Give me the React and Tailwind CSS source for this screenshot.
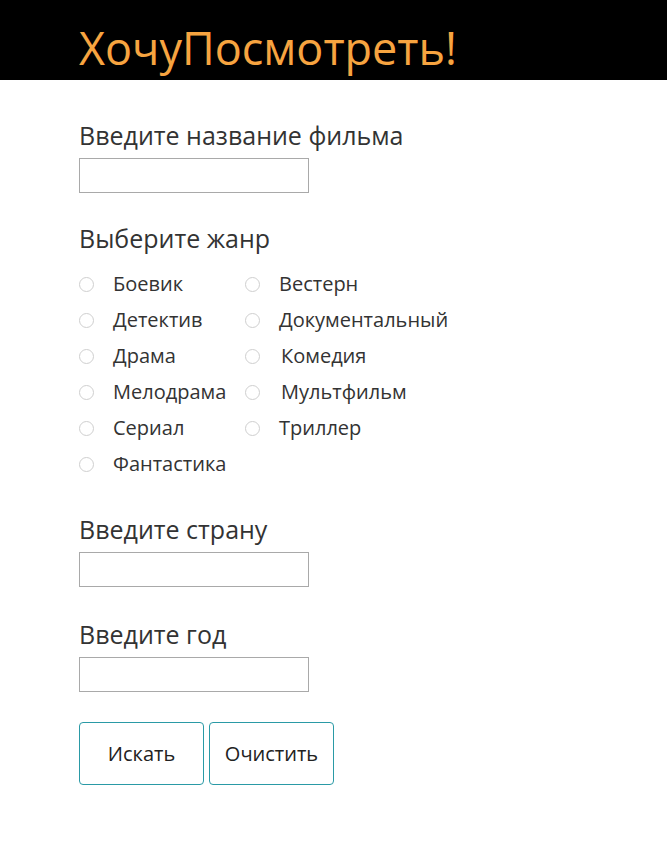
import React from "react";

const genres = [
  ["Боевик", "Вестерн"],
  ["Детектив", "Документальный"],
  ["Драма", "Комедия"],
  ["Мелодрама", "Мультфильм"],
  ["Сериал", "Триллер"],
  ["Фантастика", null],
];

function Radio({ label, shift }) {
  return (
    <label className="flex items-center h-[36px]">
      <span className="w-[15px] h-[15px] rounded-full border border-[#cfcfcf] bg-white shrink-0" />
      <span className={(shift ? "ml-[21px]" : "ml-[19px]") + " text-[20px] leading-none text-[#333]"}>{label}</span>
    </label>
  );
}

function Field({ label }) {
  return (
    <div className="flex flex-col">
      <div className="text-[25px] leading-[33px] text-[#333]">{label}</div>
      <input className="mt-[6px] w-[230px] h-[35px] border border-[#a9a9a9] bg-white outline-none" />
    </div>
  );
}

export default function App() {
  return (
    <div className="min-h-[844px] bg-white" style={{ fontFamily: '"Open Sans", sans-serif' }}>
      <header className="h-[80px] bg-black flex items-start pt-[25px] px-[79px]">
        <h1 className="text-[45px] leading-none text-[#f7a440] font-normal">ХочуПосмотреть!</h1>
      </header>
      <main className="px-[79px] pt-[39px]">
        <Field label="Введите название фильма" />
        <div className="mt-[29px]">
          <div className="text-[25px] leading-[33px] text-[#333]">Выберите жанр</div>
          <div className="mt-[11px] grid grid-cols-[166px_auto] w-fit">
            {genres.map(([a, b], i) => (
              <React.Fragment key={i}>
                <Radio label={a} />
                {b ? <Radio label={b} shift={i === 2 || i === 3} /> : <span />}
              </React.Fragment>
            ))}
          </div>
        </div>
        <div className="mt-[31px]">
          <Field label="Введите страну" />
        </div>
        <div className="mt-[31px]">
          <Field label="Введите год" />
        </div>
        <div className="mt-[30px] flex gap-[5px]">
          <button className="w-[125px] h-[63px] rounded-[4px] border border-[#2a9aa6] bg-white text-[20px] text-[#222]">Искать</button>
          <button className="w-[125px] h-[63px] rounded-[4px] border border-[#2a9aa6] bg-white text-[20px] text-[#222]">Очистить</button>
        </div>
      </main>
    </div>
  );
}
